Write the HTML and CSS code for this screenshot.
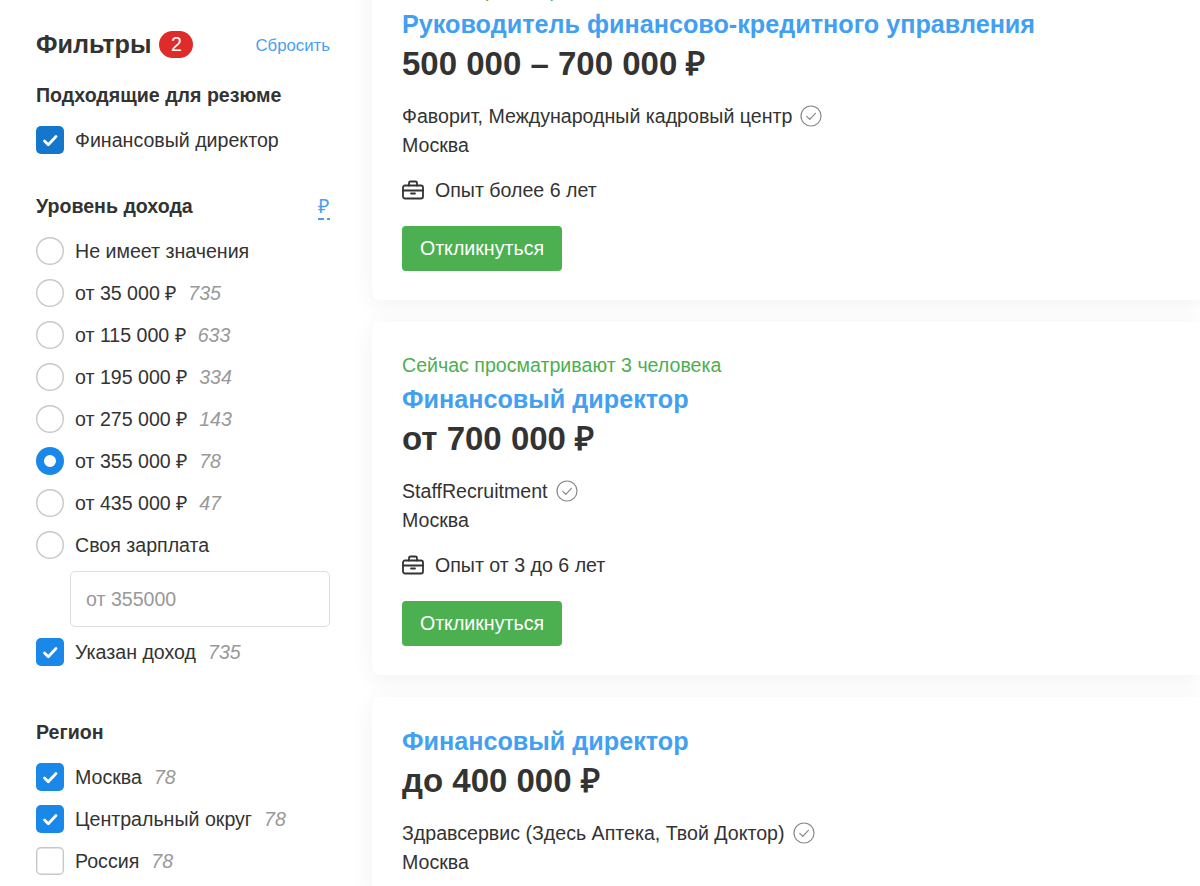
FILE: index.html
```html
<!DOCTYPE html>
<html lang="ru">
<head>
<meta charset="utf-8">
<title>Вакансии</title>
<link rel="stylesheet" href="styles.css">
</head>
<body>
<div class="page">
  <aside class="filters">
    <div class="filters-head">
      <div class="filters-title"><h2>Фильтры</h2><span class="badge">2</span></div>
      <a class="reset">Сбросить</a>
    </div>
    <section class="group group-resume">
      <h3>Подходящие для резюме</h3>
      <div class="row"><span class="box dark"><svg viewBox="0 0 28 28"><path d="M8.500 15l3.800 3.800 7.700-8.300"/></svg></span><span>Финансовый директор</span></div>
    </section>
    <section class="group group-income">
      <div class="group-head"><h3>Уровень дохода</h3><span class="currency">₽</span></div>
      <div class="row"><span class="radio"></span><span>Не имеет значения</span></div>
      <div class="row"><span class="radio"></span><span>от 35 000 ₽</span><i>735</i></div>
      <div class="row"><span class="radio"></span><span>от 115 000 ₽</span><i>633</i></div>
      <div class="row"><span class="radio"></span><span>от 195 000 ₽</span><i>334</i></div>
      <div class="row"><span class="radio"></span><span>от 275 000 ₽</span><i>143</i></div>
      <div class="row"><span class="radio on"></span><span>от 355 000 ₽</span><i>78</i></div>
      <div class="row"><span class="radio"></span><span>от 435 000 ₽</span><i>47</i></div>
      <div class="row"><span class="radio"></span><span>Своя зарплата</span></div>
      <div class="salary-input">от 355000</div>
      <div class="row"><span class="box"><svg viewBox="0 0 28 28"><path d="M8.500 15l3.800 3.800 7.700-8.300"/></svg></span><span>Указан доход</span><i>735</i></div>
    </section>
    <section class="group group-region">
      <h3>Регион</h3>
      <div class="row"><span class="box"><svg viewBox="0 0 28 28"><path d="M8.500 15l3.800 3.800 7.700-8.300"/></svg></span><span>Москва</span><i>78</i></div>
      <div class="row"><span class="box"><svg viewBox="0 0 28 28"><path d="M8.500 15l3.800 3.800 7.700-8.300"/></svg></span><span>Центральный округ</span><i>78</i></div>
      <div class="row"><span class="box empty"></span><span>Россия</span><i>78</i></div>
    </section>
  </aside>
  <main class="results">
    <article class="card card-first">
      <div class="viewers">Сейчас просматривают 2 человека</div>
      <h2 class="job">Руководитель финансово-кредитного управления</h2>
      <div class="pay">500 000 – 700 000 ₽</div>
      <div class="company">Фаворит, Международный кадровый центр<svg class="verified" viewBox="0 0 22 22"><circle cx="11" cy="11" r="10"/><path d="M6.800 11.300l3 3 5.600-6"/></svg></div>
      <div class="city">Москва</div>
      <div class="exp"><svg viewBox="0 0 22 20"><rect x="1" y="5.500" width="20" height="13" rx="2"/><path d="M7 5.500V3a1.500 1.500 0 0 1 1.500-1.500h5A1.500 1.500 0 0 1 15 3v2.500M1 10.500h20M9 13.500h4"/></svg><span>Опыт более 6 лет</span></div>
      <button class="apply">Откликнуться</button>
    </article>
    <article class="card">
      <div class="viewers">Сейчас просматривают 3 человека</div>
      <h2 class="job">Финансовый директор</h2>
      <div class="pay">от 700 000 ₽</div>
      <div class="company">StaffRecruitment<svg class="verified" viewBox="0 0 22 22"><circle cx="11" cy="11" r="10"/><path d="M6.800 11.300l3 3 5.600-6"/></svg></div>
      <div class="city">Москва</div>
      <div class="exp"><svg viewBox="0 0 22 20"><rect x="1" y="5.500" width="20" height="13" rx="2"/><path d="M7 5.500V3a1.500 1.500 0 0 1 1.500-1.500h5A1.500 1.500 0 0 1 15 3v2.500M1 10.500h20M9 13.500h4"/></svg><span>Опыт от 3 до 6 лет</span></div>
      <button class="apply">Откликнуться</button>
    </article>
    <article class="card">
      <h2 class="job">Финансовый директор</h2>
      <div class="pay">до 400 000 ₽</div>
      <div class="company">Здравсервис (Здесь Аптека, Твой Доктор)<svg class="verified" viewBox="0 0 22 22"><circle cx="11" cy="11" r="10"/><path d="M6.800 11.300l3 3 5.600-6"/></svg></div>
      <div class="city">Москва</div>
    </article>
  </main>
</div>
</body>
</html>
```
FILE: styles.css
```css
* { box-sizing: border-box; }
html, body { margin: 0; height: 100%; overflow: hidden; background: #fff; }
body { font-family: "Liberation Sans", Arial, sans-serif; color: #333; font-size: 19.6px; line-height: 28px; }
.page { display: flex; align-items: flex-start; height: 886px; overflow: hidden; }
.filters { width: 372px; flex: none; padding: 29px 42px 0 36px; }
.filters-head { display: flex; justify-content: space-between; align-items: center; height: 30px; }
.filters-title { display: flex; align-items: center; gap: 8px; }
.filters-title h2 { margin: 0; font-size: 25.2px; line-height: 30px; font-weight: 700; }
.badge { width: 34px; height: 27px; border-radius: 13.500px; background: #e02b2b; color: #fff; font-size: 19.6px; line-height: 27px; text-align: center; }
.reset { color: #4a9ff0; font-size: 16.8px; line-height: 30px; padding-top: 3px; }
h3 { margin: 0; font-size: 19.6px; line-height: 28px; font-weight: 700; }
.group-resume { margin-top: 22px; }
.group-resume h3 { margin-bottom: 17px; }
.group-income { margin-top: 38px; }
.group-head { display: flex; justify-content: space-between; margin-bottom: 17px; }
.currency { color: #4a9ff0; line-height: 28px; position: relative; width: 12px; }
.currency::after { content: ""; position: absolute; left: 0; right: 0; bottom: 0; height: 2px; background: repeating-linear-gradient(90deg, #4a9ff0 0 6px, transparent 6px 9px); }
.row { display: flex; align-items: center; height: 28px; margin-bottom: 14px; white-space: nowrap; }
.row:last-child { margin-bottom: 0; }
.row i { margin-left: 12px; color: #999; }
.box, .radio { width: 28px; height: 28px; flex: none; margin-right: 11px; }
.box { border-radius: 5px; background: #1a88e8; display: block; }
.box.dark { background: #1577cc; }
.box svg { display: block; width: 28px; height: 28px; fill: none; stroke: #fff; stroke-width: 2.800; stroke-linecap: round; stroke-linejoin: round; }
.box.empty { background: #fff; box-shadow: inset 0 0 0 1.400px #c8c8c8; }
.radio { border-radius: 50%; box-shadow: inset 0 0 0 1.400px #c8c8c8; background: #fff; }
.radio.on { box-shadow: inset 0 0 0 8px #1a88e8; }
.salary-input { margin: -2px 0 11px 34px; height: 56px; border: 1px solid #ddd; border-radius: 5px; padding: 0 15px; line-height: 54px; color: #999; }
.group-region { margin-top: 52px; }
.group-region h3 { margin-bottom: 17px; }
.results { flex: 1; display: flex; flex-direction: column; gap: 22px; min-width: 0; }
.card { background: #fff; border-radius: 8px 0 0 8px; box-shadow: 0 4px 24px rgba(0,0,0,.06); padding: 29px 30px; }
.card-first { margin-top: -53px; }
.viewers { color: #4caf50; line-height: 28px; margin-bottom: 5px; }
.job { margin: 0; font-size: 25.2px; line-height: 30px; font-weight: 700; color: #42a0f2; }
.pay { font-size: 33px; line-height: 44px; font-weight: 700; color: #333; margin-top: 3px; white-space: nowrap; }
.company { margin-top: 16px; display: flex; align-items: center; }
.city { margin-top: 1px; }
.verified { width: 22px; height: 22px; margin-left: 8px; fill: none; stroke: #888; stroke-width: 1.200; stroke-linecap: round; stroke-linejoin: round; }
.exp { margin-top: 17px; display: flex; align-items: center; gap: 11px; }
.exp svg { width: 22px; height: 20px; fill: none; stroke: #333; stroke-width: 1.800; stroke-linecap: round; }
.apply { display: block; margin-top: 22px; width: 160px; height: 45px; border: 0; border-radius: 4px; background: #4caf50; color: #fff; font: 19.6px "Liberation Sans", Arial, sans-serif; padding: 0; }
```
